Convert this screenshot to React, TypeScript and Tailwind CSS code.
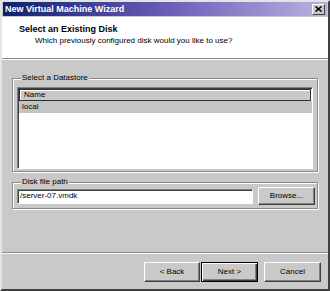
import React from "react";

const raised =
  "bg-[#c9c9c9] border border-t-white border-l-white border-r-[#404040] border-b-[#404040] shadow-[inset_-1px_-1px_0_#808080] flex items-center justify-center";

function Button({ label, def, className }: { label: string; def?: boolean; className?: string }) {
  if (def) {
    return (
      <div
        className={
          "bg-[#c9c9c9] border border-black shadow-[inset_1px_1px_0_#fff,inset_-1px_-1px_0_#404040,inset_-2px_-2px_0_#808080] flex items-center justify-center " +
          (className ?? "")
        }
      >
        {label}
      </div>
    );
  }
  return <div className={raised + " " + (className ?? "")}>{label}</div>;
}

export default function App() {
  return (
    <div className="w-[330px] h-[291px] overflow-hidden bg-[#c9c9c9] flex flex-col font-['Liberation_Sans',Arial,sans-serif] text-[8px] leading-[10px] text-black border-2 border-t-[#e4e4e4] border-l-[#e4e4e4] border-r-[#404040] border-b-[#404040]">
      {/* Title bar */}
      <div className="h-[14px] mx-[1px] flex items-center justify-between pl-[2px] pr-[2px] bg-linear-to-r from-[#0b216e] via-[#6a5cb6] to-[#bab2e2]">
        <span className="text-white font-bold text-[9px] leading-[14px]">New Virtual Machine Wizard</span>
        <div className="w-[13px] h-[11px] bg-[#c9c9c9] border border-t-white border-l-white border-r-[#404040] border-b-[#404040] flex items-center justify-center">
          <svg width="7" height="6" viewBox="0 0 7 6">
            <path d="M0.5 0.5 L6.5 5.5 M6.5 0.5 L0.5 5.5" stroke="#000" strokeWidth="1.6" />
          </svg>
        </div>
      </div>

      {/* Header */}
      <div className="h-[41px] bg-white pl-[17px] pt-[7px] mt-[1px]">
        <div className="font-bold text-[9px] leading-[11px]">Select an Existing Disk</div>
        <div className="pl-[16px] leading-[11px]">Which previously configured disk would you like to use?</div>
      </div>
      <div className="h-[1px] bg-[#8a8a8a]" />
      <div className="h-[1px] bg-white" />

      {/* Body */}
      <div className="flex flex-col px-[10px]">
        <fieldset className="mt-[13px] border border-[#8a8a8a] shadow-[1px_1px_0_#fff,inset_1px_1px_0_#fff] px-[4px] pb-[2px]">
          <legend className="ml-[4px] px-[1px] bg-[#c9c9c9] leading-[10px]">Select a Datastore</legend>
          <div className="mt-[4px] h-[82px] bg-white border border-t-[#808080] border-l-[#808080] border-r-white border-b-white shadow-[inset_1px_1px_0_#404040] flex flex-col pl-[1px] pt-[1px]">
            <div className="h-[12px] mr-[1px] bg-[#c9c9c9] border border-[#303030] shadow-[inset_1px_1px_0_#fff] pl-[4px] flex items-center">
              Name
            </div>
            <div className="h-[12px] bg-[#c4c4c4] pl-[3px] flex items-center">local</div>
          </div>
        </fieldset>

        <fieldset className="mt-[5px] border border-[#8a8a8a] shadow-[1px_1px_0_#fff,inset_1px_1px_0_#fff] pl-[4px] pr-[2px] pb-[3px]">
          <legend className="ml-[4px] px-[1px] bg-[#c9c9c9] leading-[10px]">Disk file path</legend>
          <div className="h-[18px] flex items-center gap-[5px]">
            <div className="flex-1 h-[15px] bg-white border border-t-[#808080] border-l-[#808080] border-r-white border-b-white shadow-[inset_1px_1px_0_#404040] flex items-center pl-[2px]">
              /server-07.vmdk
            </div>
            <Button label="Browse..." className="w-[57px] h-[18px]" />
          </div>
        </fieldset>
      </div>

      <div className="flex-1" />

      <div className="h-[1px] bg-[#8a8a8a]" />
      <div className="h-[1px] bg-white" />

      <div className="h-[35px] flex items-start justify-end pt-[8px] pr-[7px]">
        <Button label="< Back" className="w-[56px] h-[20px]" />
        <Button label="Next >" def className="w-[57px] h-[20px] ml-[1px]" />
        <Button label="Cancel" className="w-[57px] h-[20px] ml-[6px]" />
      </div>
    </div>
  );
}
